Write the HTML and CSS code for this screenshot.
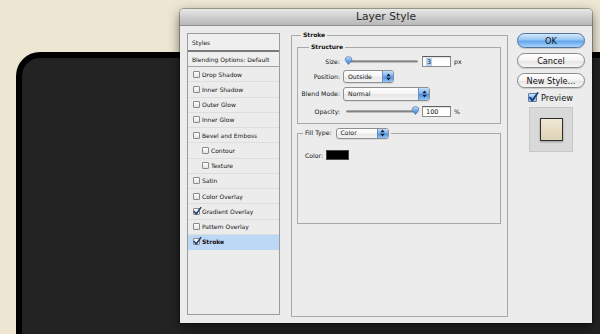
FILE: index.html
```html
<!DOCTYPE html>
<html>
<head>
<meta charset="utf-8">
<title>Layer Style</title>
<link rel="stylesheet" href="styles.css">
</head>
<body>
<div class="canvas"><div class="panel"></div></div>

<div class="dialog">
  <div class="titlebar">Layer Style</div>
  <div class="dbody">
    <div class="list">
      <div class="lhead">Styles</div>
      <div class="lblend">Blending Options: Default</div>
      <div class="item"><span class="cb"></span>Drop Shadow</div>
      <div class="item"><span class="cb"></span>Inner Shadow</div>
      <div class="item"><span class="cb"></span>Outer Glow</div>
      <div class="item"><span class="cb"></span>Inner Glow</div>
      <div class="item"><span class="cb"></span>Bevel and Emboss</div>
      <div class="item sub"><span class="cb"></span>Contour</div>
      <div class="item sub"><span class="cb"></span>Texture</div>
      <div class="item"><span class="cb"></span>Satin</div>
      <div class="item"><span class="cb"></span>Color Overlay</div>
      <div class="item"><span class="cb on"><svg width="9" height="9" viewBox="0 0 9 9"><path d="M1.2 4.6 L3.2 7 L7.8 0.6" fill="none" stroke="#1d3c72" stroke-width="1.5" stroke-linecap="round" stroke-linejoin="round"/></svg></span>Gradient Overlay</div>
      <div class="item"><span class="cb"></span>Pattern Overlay</div>
      <div class="item sel"><span class="cb on"><svg width="9" height="9" viewBox="0 0 9 9"><path d="M1.2 4.6 L3.2 7 L7.8 0.6" fill="none" stroke="#1d3c72" stroke-width="1.5" stroke-linecap="round" stroke-linejoin="round"/></svg></span><b>Stroke</b></div>
    </div>

    <div class="main">
      <fieldset class="fs outer">
        <legend>Stroke</legend>
        <fieldset class="fs struct">
          <legend>Structure</legend>
          <div class="row">
            <span class="lbl">Size:</span>
            <svg class="slider" width="76" height="13" viewBox="0 0 76 13">
              <defs>
                <linearGradient id="thA" x1="0" y1="0" x2="0" y2="1">
                  <stop offset="0" stop-color="#c7e0fa"/>
                  <stop offset="0.5" stop-color="#6ea8ea"/>
                  <stop offset="1" stop-color="#3b7fd6"/>
                </linearGradient>
              </defs>
              <line x1="4" y1="6.5" x2="74" y2="6.5" stroke="#8c8c8c" stroke-width="2" stroke-linecap="round"/>
              <line x1="4" y1="6" x2="74" y2="6" stroke="#6e6e6e" stroke-width="0.6"/>
              <path d="M2 5 A3.5 3.5 0 0 1 9 5 L5.5 9.6 Z" fill="url(#thA)" stroke="#4b6f9f" stroke-width="0.6"/>
            </svg>
            <span class="input"><span class="hl">3</span></span>
            <span class="unit">px</span>
          </div>
          <div class="row r2">
            <span class="lbl">Position:</span>
            <span class="popup pw-pos"><span class="ptxt">Outside</span><span class="step"><svg width="7" height="10" viewBox="0 0 7 10"><path d="M1.3 4.2 L3.5 1.4 L5.7 4.2 Z M1.3 5.8 L3.5 8.6 L5.7 5.8 Z" fill="#14213a"/></svg></span></span>
          </div>
          <div class="row r3">
            <span class="lbl">Blend Mode:</span>
            <span class="popup pw-blend"><span class="ptxt">Normal</span><span class="step"><svg width="7" height="10" viewBox="0 0 7 10"><path d="M1.3 4.2 L3.5 1.4 L5.7 4.2 Z M1.3 5.8 L3.5 8.6 L5.7 5.8 Z" fill="#14213a"/></svg></span></span>
          </div>
          <div class="row r4">
            <span class="lbl">Opacity:</span>
            <svg class="slider" width="76" height="13" viewBox="0 0 76 13">
              <line x1="4" y1="6.5" x2="74" y2="6.5" stroke="#8c8c8c" stroke-width="2" stroke-linecap="round"/>
              <line x1="4" y1="6" x2="74" y2="6" stroke="#6e6e6e" stroke-width="0.6"/>
              <path d="M69 5 A3.5 3.5 0 0 1 76 5 L72.5 9.6 Z" fill="url(#thA)" stroke="#4b6f9f" stroke-width="0.6"/>
            </svg>
            <span class="input">100</span>
            <span class="unit">%</span>
          </div>
        </fieldset>

        <fieldset class="fs fill">
          <legend><span class="lgwrap"><span>Fill Type:</span><span class="popup pw-fill"><span class="ptxt">Color</span><span class="step"><svg width="7" height="10" viewBox="0 0 7 10"><path d="M1.3 4.2 L3.5 1.4 L5.7 4.2 Z M1.3 5.8 L3.5 8.6 L5.7 5.8 Z" fill="#14213a"/></svg></span></span></span></legend>
          <div class="colorrow"><span>Color:</span><span class="swatch"></span></div>
        </fieldset>
      </fieldset>
    </div>

    <div class="side">
      <div class="btn ok">OK</div>
      <div class="btn">Cancel</div>
      <div class="btn">New Style...</div>
      <div class="prev"><span class="pcb"><svg width="11" height="11" viewBox="0 0 11 11"><path d="M2 5.6 L4.4 8.6 L9.6 1" fill="none" stroke="#1d3c72" stroke-width="1.8" stroke-linecap="round" stroke-linejoin="round"/></svg></span>Preview</div>
      <div class="pbox"><div class="pswatch"></div></div>
    </div>
  </div>
</div>
</body>
</html>
```

FILE: styles.css
```css
* { box-sizing: border-box; }

html, body {
  margin: 0;
  width: 600px;
  height: 334px;
  overflow: hidden;
}

body {
  background: #ede6d3;
  position: relative;
  font-family: "DejaVu Sans", "Liberation Sans", sans-serif;
  color: #141414;
}

.canvas {
  padding: 52px 0 0 16px;
}

.panel {
  width: 584px;
  height: 282px;
  background: #232323;
  border: 6px solid #000;
  border-right: 0;
  border-bottom: 0;
  border-top-left-radius: 24px;
}

.dialog {
  position: absolute;
  left: 180px;
  top: 9px;
  width: 412px;
  height: 314px;
  background: #ececec;
  border-radius: 4px 4px 0 0;
  box-shadow: 0 0 0 1px rgba(0, 0, 0, 0.28), 0 4px 12px rgba(0, 0, 0, 0.55);
  display: flex;
  flex-direction: column;
}

.titlebar {
  flex: none;
  height: 17px;
  background: linear-gradient(#e8e8e8, #c9c9c9 60%, #b9b9b9);
  border-bottom: 1px solid #8e8e8e;
  border-radius: 4px 4px 0 0;
  font-size: 10.7px;
  line-height: 16px;
  text-align: center;
  color: #2a2a2a;
}

.dbody {
  display: flex;
  align-items: flex-start;
  padding: 0 7px;
}

/* ---------- styles list ---------- */
.list {
  margin-top: 7px;
  width: 93px;
  height: 282px;
  border: 1px solid #9c9c9c;
  background: #ececec;
  font-size: 6px;
}

.lhead {
  height: 18px;
  border-bottom: 2px solid #7a7a7a;
  padding-left: 4px;
  display: flex;
  align-items: center;
  background: #efefef;
}

.lblend {
  height: 15px;
  border-bottom: 1px solid #a3a3a3;
  padding-left: 4px;
  display: flex;
  align-items: center;
  background: #efefef;
}

.item {
  height: 15.25px;
  border-bottom: 1px solid #dedede;
  padding-left: 5px;
  display: flex;
  align-items: center;
}

.item.sub { padding-left: 14px; }

.item.sel {
  background: #bdd7f7;
  border-bottom-color: #bdd7f7;
}

.item b { font-weight: bold; }

.cb {
  width: 7px;
  height: 7px;
  margin-right: 2px;
  border: 1px solid #8a8a8a;
  border-radius: 1px;
  background: linear-gradient(#ffffff, #e3e3e3);
  position: relative;
  flex: none;
}

.cb svg {
  position: absolute;
  left: -1px;
  top: -2px;
}

/* ---------- fieldsets ---------- */
.main {
  margin-left: 11px;
  width: 217px;
}

.fs {
  margin: 0;
  border: 1px solid #a9a9a9;
  min-width: 0;
}

.fs > legend {
  padding: 0 2px;
  font-size: 6px;
  font-weight: bold;
  line-height: 8px;
}

.outer {
  margin-top: 5px;
  height: 286px;
  padding: 4px 6px 0 5px;
}

.outer > legend { margin-left: 4px; }

.struct {
  padding: 4px 0 5px 0;
}

.struct > legend { margin-left: 11px; }

.fill {
  margin-top: 3px;
  height: 97px;
  padding: 11px 0 0 0;
}

.fill > legend {
  margin-left: 5px;
  font-weight: normal;
  line-height: 12px;
  font-size: 6.2px;
}

.lgwrap {
  display: inline-flex;
  align-items: center;
  height: 12px;
  vertical-align: top;
}

.row {
  display: flex;
  align-items: center;
  height: 13px;
  font-size: 6.2px;
}

.r2 { margin-top: 2px; }
.r3 { margin-top: 4px; }
.r4 { margin-top: 5px; }

.lbl {
  width: 42px;
  margin-right: 3px;
  text-align: right;
  flex: none;
}

.slider {
  display: block;
  flex: none;
}

.input {
  margin-left: 3px;
  width: 29px;
  height: 11px;
  border: 1px solid #8b8b8b;
  border-top-color: #5f5f5f;
  background: #fff;
  font-size: 6.5px;
  padding-left: 3px;
  display: flex;
  align-items: center;
  box-shadow: inset 0 1px 1px rgba(0, 0, 0, 0.12);
}

.hl {
  background: #b7d3f3;
  padding: 0 1px;
  line-height: 8px;
}

.unit {
  margin-left: 3px;
}

.popup {
  display: flex;
  align-items: center;
  height: 13px;
  border: 1px solid #8f8f8f;
  border-radius: 3px;
  background: linear-gradient(#ffffff, #f4f4f4 50%, #e7e7e7 51%, #f3f3f3);
  padding-left: 4px;
  box-shadow: 0 1px 0 rgba(0, 0, 0, 0.08);
  font-size: 6.2px;
  flex: none;
}

.pw-pos { width: 51px; }
.pw-blend { width: 87px; height: 14px; }
.pw-fill { width: 53px; height: 11px; margin-left: 4px; }

.ptxt { flex: 1; }

.step {
  width: 11px;
  height: 100%;
  background: linear-gradient(#c3dffa, #7fb4ee 45%, #4f92e2 55%, #93c6f6);
  border-left: 1px solid #6d8fbd;
  border-radius: 0 2px 2px 0;
  display: flex;
  align-items: center;
  justify-content: center;
}

.colorrow {
  display: flex;
  align-items: center;
  height: 10px;
  padding-left: 7px;
  font-size: 6.2px;
}

.swatch {
  margin-left: 3px;
  width: 23px;
  height: 10px;
  background: #000;
  border: 1px solid #4a4a4a;
}

/* ---------- side buttons ---------- */
.side {
  margin-left: 9px;
  margin-top: 7px;
  width: 68px;
  display: flex;
  flex-direction: column;
}

.btn {
  height: 15px;
  margin-bottom: 5px;
  border: 1px solid #8a8a8a;
  border-radius: 8px;
  background: linear-gradient(#ffffff, #f3f3f3 50%, #e3e3e3 51%, #f7f7f7);
  font-size: 8.2px;
  color: #111;
  display: flex;
  align-items: center;
  justify-content: center;
  box-shadow: 0 1px 1px rgba(0, 0, 0, 0.15);
}

.btn.ok {
  background: linear-gradient(#d6e9fc, #95c5f4 45%, #62a5ec 55%, #a9d3f9);
  border-color: #52729e;
}

.prev {
  display: flex;
  align-items: center;
  height: 9px;
  padding-left: 11px;
  font-size: 8.2px;
}

.pcb {
  width: 9px;
  height: 9px;
  margin-right: 4px;
  border: 1px solid #5b7aa6;
  border-radius: 1px;
  background: linear-gradient(#d5e8fb, #79b1ec 55%, #a7d0f7);
  position: relative;
  flex: none;
}

.pcb svg {
  position: absolute;
  left: -1px;
  top: -2px;
}

.pbox {
  margin-top: 5px;
  margin-left: 12px;
  width: 44px;
  height: 45px;
  background: #d9d9d9;
  border: 1px solid #c6c6c6;
  display: flex;
  align-items: center;
  justify-content: center;
}

.pswatch {
  width: 23px;
  height: 23px;
  background: linear-gradient(#efe8d3, #ddd3b6);
  border: 1px solid #2e2e2e;
  box-shadow: 0 1px 2px rgba(0, 0, 0, 0.3);
}
```
